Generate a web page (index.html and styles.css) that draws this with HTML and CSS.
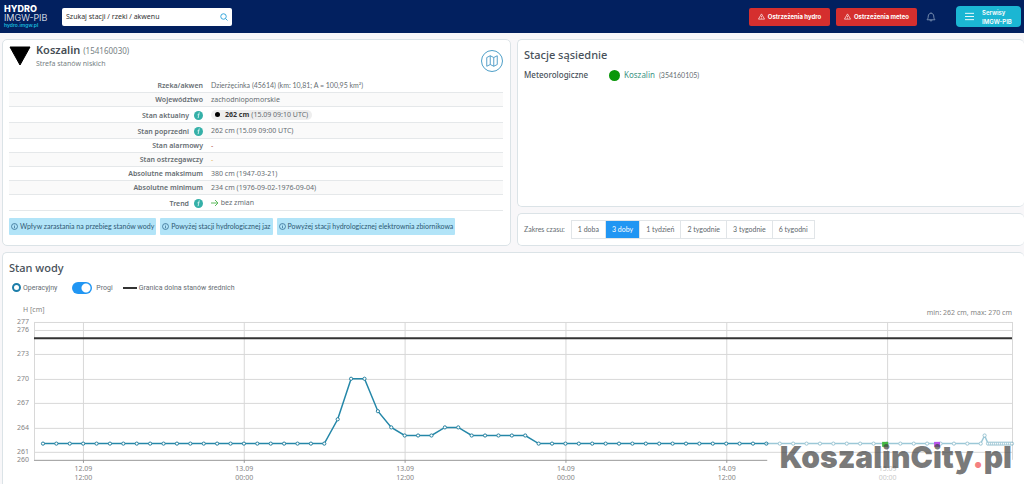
FILE: index.html
```html
<!DOCTYPE html>
<html lang="pl">
<head>
<meta charset="utf-8">
<meta name="viewport" content="width=device-width, initial-scale=1">
<title>Koszalin – Hydro IMGW-PIB</title>
<link rel="stylesheet" href="styles.css">
</head>
<body>
<svg class="defs" aria-hidden="true">
  <symbol id="warn" viewBox="0 0 16 16"><path d="M8 2 L15 14 H1 Z M8 6.500 V10.200 M8 11.400 V12.800" fill="none" stroke="currentColor" stroke-width="1.500" stroke-linejoin="round"/></symbol>
  <symbol id="info-line" viewBox="0 0 16 16"><circle cx="8" cy="8" r="6.800" fill="none" stroke="currentColor" stroke-width="1.600"/><path d="M8 7 V12 M8 4 V5.600" stroke="currentColor" stroke-width="1.600"/></symbol>
  <symbol id="info-fill" viewBox="0 0 20 20"><circle cx="10" cy="10" r="10" fill="#35b0a8"/><path d="M11.500 4 L11 6 M10.700 8 L9.300 15 M8.500 8.500 L10.700 8" fill="none" stroke="#e8fbfa" stroke-width="1.800" stroke-linecap="round"/></symbol>
</svg>
<header class="topbar">
  <a class="logo" href="#"><span class="logo-name">HYDRO</span><span class="logo-org">IMGW-PIB</span><span class="logo-url">hydro.imgw.pl</span></a>
  <label class="search">
    <input type="search" placeholder="Szukaj stacji / rzeki / akwenu" aria-label="Szukaj stacji / rzeki / akwenu">
    <svg class="icon-search" viewBox="0 0 16 16" aria-hidden="true"><circle cx="7" cy="7" r="5.500"/><path d="M11 11 L15 15"/></svg>
  </label>
  <div class="actions">
    <button class="alert" type="button"><svg class="icon-warn"><use href="#warn"/></svg>Ostrzeżenia hydro</button>
    <button class="alert" type="button"><svg class="icon-warn"><use href="#warn"/></svg>Ostrzeżenia meteo</button>
    <button class="bell" type="button" aria-label="Powiadomienia"><svg viewBox="0 0 20 20"><path d="M2 15.500 C4.500 13 4.200 11 4.500 8 C5 4.500 7 2.500 10 2.500 C13 2.500 15 4.500 15.500 8 C15.800 11 15.500 13 18 15.500 Z M8 16 C8 19 12 19 12 16 M10 2.500 V1"/></svg></button>
    <button class="services" type="button"><svg viewBox="0 0 10 10"><path d="M0 1.500 H10 M0 5 H10 M0 8.500 H10"/></svg><span>Serwisy<br>IMGW-PIB</span></button>
  </div>
</header>
<main class="page">
  <section class="card station">
    <div class="station-head">
      <svg class="level" viewBox="0 0 22 20" aria-hidden="true"><path d="M1 1 H21 L11 19 Z" fill="#000" stroke="#000" stroke-linejoin="round"/></svg>
      <div class="station-title">
        <h1>Koszalin <small>(154160030)</small></h1>
        <p>Strefa stanów niskich</p>
      </div>
      <button class="map" type="button" aria-label="Mapa"><svg viewBox="0 0 16 16"><path d="M2 4 L6 2 L10 4 L14 2 V12 L10 14 L6 12 L2 14 Z M6 2 V12 M10 4 V14"/></svg></button>
    </div>
    <table class="facts">
      <tbody>
        <tr><th scope="row">Rzeka/akwen</th><td class="narrow">Dzierżęcinka (45614) (km: 10,81; A = 100,95 km²)</td></tr>
        <tr><th scope="row">Województwo</th><td>zachodniopomorskie</td></tr>
        <tr class="tall"><th scope="row"><span class="hint">Stan aktualny<svg><use href="#info-fill"/></svg></span></th><td><span class="now"><i class="dot"></i><b>262 cm</b> (15.09 09:10 UTC)</span></td></tr>
        <tr class="tall"><th scope="row"><span class="hint">Stan poprzedni<svg><use href="#info-fill"/></svg></span></th><td>262 cm (15.09 09:00 UTC)</td></tr>
        <tr><th scope="row">Stan alarmowy</th><td class="alarm">-</td></tr>
        <tr><th scope="row">Stan ostrzegawczy</th><td class="warning">-</td></tr>
        <tr><th scope="row">Absolutne maksimum</th><td>380 cm (1947-03-21)</td></tr>
        <tr><th scope="row">Absolutne minimum</th><td>234 cm (1976-09-02-1976-09-04)</td></tr>
        <tr class="tall"><th scope="row"><span class="hint">Trend<svg><use href="#info-fill"/></svg></span></th><td><svg class="trend" viewBox="0 0 8 8" aria-hidden="true"><path d="M0 4 H7 M4 1 L7 4 L4 7"/></svg> bez zmian</td></tr>
      </tbody>
    </table>
    <div class="tags">
      <span class="tag"><svg><use href="#info-line"/></svg>Wpływ zarastania na przebieg stanów wody</span>
      <span class="tag"><svg><use href="#info-line"/></svg>Powyżej stacji hydrologicznej jaz</span>
      <span class="tag"><svg><use href="#info-line"/></svg>Powyżej stacji hydrologicznej elektrownia zbiornikowa</span>
    </div>
  </section>
  <div class="side">
    <section class="card nearby">
      <h2>Stacje sąsiednie</h2>
      <dl><dt>Meteorologiczne</dt><dd><i class="status"></i><a href="#">Koszalin</a><small>(354160105)</small></dd></dl>
    </section>
    <section class="card range">
      <span>Zakres czasu:</span>
      <div class="segments">
        <button type="button">1 doba</button><button type="button" class="active">3 doby</button><button type="button">1 tydzień</button><button type="button">2 tygodnie</button><button type="button">3 tygodnie</button><button type="button">6 tygodni</button>
      </div>
    </section>
  </div>
  <section class="card water">
    <h2>Stan wody</h2>
    <div class="legend">
      <span class="series"><i class="ring"></i>Operacyjny</span>
      <label class="switch"><input type="checkbox" checked>Progi</label>
      <span class="series"><i class="line"></i>Granica dolna stanów średnich</span>
    </div>
    <div class="chart-wrap">
      <svg class="chart" id="chart" viewBox="0 0 1020 182" role="img" aria-label="Stan wody, H [cm]"></svg>
      <div class="watermark">KoszalinCity<span>.</span>pl</div>
    </div>
  </section>
</main>
<script src="chart.js"></script>
</body>
</html>
```
FILE: styles.css
```css
* { box-sizing: border-box; }
body { display: flex; flex-direction: column; min-height: 100vh; margin: 0; background: #f8f7f9; color: #666d72; font: 7px/10px "Noto Sans", "Open Sans", sans-serif; }
button, input { font: inherit; }
button { cursor: pointer; }
h1, h2, p, dl, dd { margin: 0; }
.defs { position: absolute; width: 0; height: 0; }

.topbar { display: flex; align-items: center; height: 33px; padding: 0 3px 0 4px; background: #02205f; color: #fff; }
.logo { display: flex; flex-direction: column; width: 58px; color: #fff; text-decoration: none; font-family: Inter, sans-serif; }
.logo-name { font-size: 9px; line-height: 9px; font-weight: 800; }
.logo-org { font-size: 9px; line-height: 9px; font-weight: 300; }
.logo-url { font-size: 5px; line-height: 7px; font-weight: 600; color: #18b9dc; }
.search { display: flex; align-items: center; width: 170px; height: 18px; padding: 0 4px; background: #fff; border-radius: 2px; }
.search input { flex: 1; min-width: 0; padding: 0; border: 0; outline: 0; background: none; font-size: 7px; color: #333; }
.search input::placeholder { color: #333; opacity: 1; }
.icon-search { width: 8px; height: 8px; fill: none; stroke: #35a7dc; stroke-width: 2; }
.actions { display: flex; align-items: center; margin-left: auto; font-family: Inter, sans-serif; }
.alert { display: flex; align-items: center; justify-content: center; gap: 3px; width: 81px; height: 18px; margin-right: 6px; padding: 0; border: 0; border-radius: 2px; background: #d52f2e; color: #fff; font-size: 6px; font-weight: 700; white-space: nowrap; }
.icon-warn { width: 7px; height: 7px; }
.bell { width: 10px; height: 10px; margin: 0 20px 0 3px; padding: 0; border: 0; background: none; }
.bell svg { display: block; width: 10px; height: 10px; fill: none; stroke: #7187ab; stroke-width: 2; }
.services { display: flex; align-items: center; gap: 8px; width: 65px; height: 21px; padding: 0 9px; border: 0; border-radius: 4px; background: #1bb6d3; color: #fff; font-size: 6px; line-height: 9px; font-weight: 600; text-align: left; white-space: nowrap; }
.services svg { flex: none; width: 9px; height: 9px; fill: none; stroke: #fff; stroke-width: 1; }

.page { flex: 1; display: grid; grid-template-columns: minmax(0, 509fr) minmax(0, 507fr); grid-template-rows: auto 1fr; gap: 6px; padding: 6px 0 0 2px; }
.card { background: #fff; border: 1px solid #dbe3e7; border-radius: 5px; }
h2 { font-size: 11px; line-height: 16px; font-weight: 500; color: #48515a; }

.station { padding: 2px 7px 10px 6px; }
.station-head { display: flex; height: 36px; }
.level { width: 22px; height: 20px; margin-top: 4px; }
.station-title { flex: 1; padding-left: 5px; }
.station-title h1 { font-size: 11px; line-height: 16px; font-weight: 600; color: #454d54; }
.station-title small { font-size: 8px; font-weight: 400; color: #777f84; }
.station-title p { font-size: 7px; line-height: 10px; color: #777f84; }
.map { display: grid; place-items: center; width: 22px; height: 22px; margin-top: 8px; padding: 0; border: 1px solid #4e9fc8; border-radius: 50%; background: #fff; }
.map svg { width: 14px; height: 14px; fill: none; stroke: #4094c2; stroke-width: 1; stroke-linejoin: round; }
.facts { width: 100%; border-collapse: collapse; table-layout: fixed; }
.facts tr { height: 14px; border-bottom: 1px solid #e5e8ea; }
.facts tr.tall { height: 16px; }
.facts tr:nth-child(even) { background: #fafafa; }
.facts th { width: 194px; padding: 2px 0 0; text-align: right; font-weight: 600; line-height: 10px; }
.facts .tall th { padding-top: 3px; }
.facts td { padding: 1px 0 0 8px; line-height: 10px; white-space: nowrap; }
.facts .narrow { font-family: Lato, sans-serif; }
.hint { display: inline-flex; align-items: center; gap: 5px; vertical-align: top; }
.hint svg { width: 9px; height: 9px; }
.now { display: inline-flex; align-items: center; gap: 2px; padding: 0 4px; border-radius: 5px; background: #eee; vertical-align: top; }
.now b { color: #333; }
.dot { width: 5px; height: 5px; margin-right: 3px; border-radius: 50%; background: #000; }
.alarm { color: #b04a3a; }
.warning { color: #e5b04a; }
.trend { width: 8px; height: 8px; vertical-align: middle; fill: none; stroke: #5cba5c; stroke-width: 1; }
.tags { display: flex; flex-wrap: wrap; gap: 4px; margin-top: 7px; }
.tag { display: flex; align-items: center; gap: 2px; height: 17px; padding: 0 2px; border-radius: 1px; background: #b2e4f8; color: #2d5873; font-family: Lato, sans-serif; white-space: nowrap; }
.tag svg { width: 7px; height: 7px; color: #245f86; }

.side { display: flex; flex-direction: column; gap: 6px; }
.nearby { flex: 1; padding: 7px 6px; border-right: 0; }
.nearby dl { display: flex; align-items: center; margin-top: 6px; }
.nearby dt { width: 85px; font-size: 8px; line-height: 12px; font-weight: 500; color: #48515a; }
.nearby dd { display: flex; align-items: center; }
.status { width: 11px; height: 11px; margin-right: 4px; border-radius: 50%; background: #0a970a; }
.nearby a { margin-right: 4px; font-size: 8px; color: #3d9584; text-decoration: none; }
.nearby small { font-family: Lato, sans-serif; font-size: 7px; }
.range { display: flex; align-items: center; gap: 6px; height: 33px; padding: 0 6px; border-right: 0; font-family: Lato, sans-serif; }
.segments { display: flex; border: 1px solid #e1e5e8; }
.segments button { height: 17px; padding: 0 6px; border: 0; border-left: 1px solid #e1e5e8; background: #fff; color: #60676c; white-space: nowrap; }
.segments button:first-child { border-left: 0; }
.segments .active { background: #2196f3; color: #fff; }

.water { grid-column: 1 / -1; padding: 7px 2px 0 0; border-bottom: 0; border-right: 0; border-radius: 5px 5px 0 0; }
.water h2 { padding-left: 6px; }
.legend { display: flex; align-items: center; height: 24px; padding-left: 9px; font-family: Roboto, sans-serif; }
.series, .switch { display: flex; align-items: center; gap: 2px; }
.ring { width: 9px; height: 9px; border: 2px solid #1d7eaa; border-radius: 50%; }
.switch { gap: 4px; margin: 0 10px 0 15px; }
.switch input { appearance: none; width: 20px; height: 12px; margin: 0; border-radius: 6px; background: radial-gradient(circle at 14px 6px, #fff 4px, #2196f3 5px); }
.line { width: 14px; height: 2px; background: #333; }
.chart-wrap { position: relative; }
.chart { display: block; width: 100%; height: auto; font-family: "Noto Sans", sans-serif; font-size: 7px; fill: #858585; }
.chart .grid { stroke: #d8d8d8; stroke-width: 1; }
.chart .axis { stroke: #999; stroke-width: 1; }
.chart .limit { stroke: #333; stroke-width: 2; }
.chart .water-line { fill: none; stroke: #2487a8; stroke-width: 1.5; }
.chart .point { fill: #fff; stroke: #24809f; stroke-width: 1; }
.chart .faded { opacity: 0.45; }
.watermark { position: absolute; right: 10px; bottom: 6px; font: 900 30px/36px Inter, sans-serif; color: rgba(70, 70, 70, 0.72); }
.watermark span { color: #f48080; }
```
FILE: chart.js
```js
const svg = document.getElementById("chart");
const left = 31, right = 1010, top0 = 22, bottom = 160;
const y = v => bottom - (v - 260) * (bottom - top0) / 17;
const x = h => 40 + h * 13.41;

function add(tag, attrs, text, parent = svg) {
  const el = document.createElementNS("http://www.w3.org/2000/svg", tag);
  for (const key in attrs) el.setAttribute(key, attrs[key]);
  if (text) el.textContent = text;
  parent.appendChild(el);
  return el;
}

add("text", { x: 20, y: 12 }, "H [cm]");
add("text", { x: right, y: 15, "text-anchor": "end" }, "min: 262 cm, max: 270 cm");
for (const v of [277, 276, 273, 270, 267, 264, 261, 260]) {
  const yy = Math.round(y(v)) + 0.5;
  if (v > 260) add("line", { x1: left, x2: right, y1: yy, y2: yy, class: "grid" });
  add("text", { x: 26, y: yy + 2, "text-anchor": "end" }, String(v));
}
for (const xx of [left, right]) add("line", { x1: xx + 0.5, x2: xx + 0.5, y1: top0, y2: bottom, class: "grid" });
["12.09 12:00", "13.09 00:00", "13.09 12:00", "14.09 00:00", "14.09 12:00", "15.09 00:00"].forEach((label, i) => {
  const xx = Math.round(x(3 + i * 12)) + 0.5;
  const faded = i === 5 ? "faded" : "";
  const [day, hour] = label.split(" ");
  add("line", { x1: xx, x2: xx, y1: top0, y2: bottom, class: "grid" });
  if (i < 5) add("line", { x1: xx, x2: xx, y1: bottom, y2: bottom + 3, class: "axis" });
  add("text", { x: xx, y: 171, "text-anchor": "middle", class: faded }, day);
  add("text", { x: xx, y: 180, "text-anchor": "middle", class: faded }, hour);
});
add("line", { x1: left, x2: 765, y1: bottom + 0.5, y2: bottom + 0.5, class: "axis" });
add("line", { x1: left, x2: right, y1: y(275), y2: y(275), class: "limit" });

const rise = [265, 270, 270, 266, 264, 263, 263, 263, 264, 264, 263, 263, 263, 263, 263];
const data = [];
for (let h = 0; h <= 70; h++) data.push([x(h), y(rise[h - 22] || 262)]);
data.push([982.6, y(263)]);
for (let px = 986; px <= 1010; px += 2) data.push([px, y(262)]);

const solid = add("g", {});
const faded = add("g", { class: "faded" });
const split = 55;
const pts = list => list.map(p => p.join(",")).join(" ");
add("polyline", { points: pts(data.slice(0, split)), class: "water-line" }, "", solid);
add("polyline", { points: pts(data.slice(split - 1)), class: "water-line" }, "", faded);
data.forEach((p, i) => add("circle", { cx: p[0], cy: p[1], r: 1.6, class: "point" }, "", i < split ? solid : faded));
add("rect", { x: 880, y: 142, width: 6, height: 5, fill: "#42b842" });
add("rect", { x: 932, y: 142, width: 6, height: 5, fill: "#b653ee" });
```
